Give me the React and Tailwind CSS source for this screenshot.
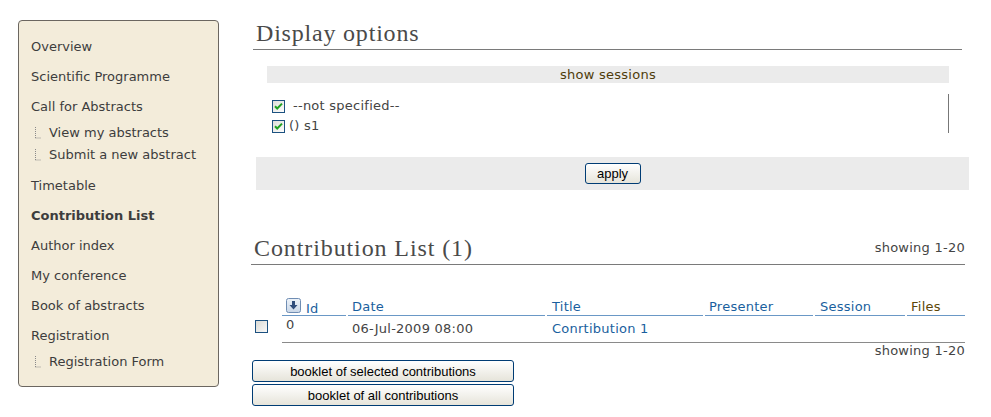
import React from "react";

const menu = [
  { label: "Overview" },
  { label: "Scientific Programme" },
  { label: "Call for Abstracts", subs: ["View my abstracts", "Submit a new abstract"], gap: true },
  { label: "Timetable" },
  { label: "Contribution List", active: true },
  { label: "Author index" },
  { label: "My conference" },
  { label: "Book of abstracts" },
  { label: "Registration", subs: ["Registration Form"] },
];

function TreeMark() {
  return (
    <svg width="8" height="12" viewBox="0 0 8 12" className="mr-[7px] shrink-0">
      <path d="M1.5 0v11M1.5 11h6" stroke="#8a8a8a" strokeWidth="1" strokeDasharray="1 1" fill="none" />
    </svg>
  );
}

function CheckedBox() {
  return (
    <svg width="13" height="13" viewBox="0 0 13 13" className="shrink-0">
      <defs>
        <linearGradient id="cbg" x1="0" y1="0" x2="1" y2="1">
          <stop offset="0" stopColor="#dcdcd6" />
          <stop offset="1" stopColor="#ffffff" />
        </linearGradient>
      </defs>
      <rect x="0.5" y="0.5" width="12" height="12" fill="url(#cbg)" stroke="#1c5180" />
      <path d="M3 6.2l2.2 2.3L10 3.6" stroke="#21a121" strokeWidth="2" fill="none" />
    </svg>
  );
}

function EmptyBox() {
  return (
    <svg width="13" height="13" viewBox="0 0 13 13" className="shrink-0">
      <defs>
        <linearGradient id="ebg" x1="0" y1="0" x2="1" y2="1">
          <stop offset="0" stopColor="#d9d9d3" />
          <stop offset="1" stopColor="#fafafa" />
        </linearGradient>
      </defs>
      <rect x="0.5" y="0.5" width="12" height="12" fill="url(#ebg)" stroke="#1c5180" />
    </svg>
  );
}

function SortIcon() {
  return (
    <svg width="15" height="15" viewBox="0 0 15 15" className="shrink-0">
      <defs>
        <linearGradient id="sbg" x1="0" y1="0" x2="0" y2="1">
          <stop offset="0" stopColor="#eef3f9" />
          <stop offset="1" stopColor="#c9d7e8" />
        </linearGradient>
      </defs>
      <rect x="0.5" y="0.5" width="14" height="14" rx="2" fill="url(#sbg)" stroke="#6f8db3" />
      <path d="M6 3h3v4h2.5L7.5 11.5 3.5 7H6z" fill="#2f4d7c" />
    </svg>
  );
}

function XpButton({ children, className }) {
  return (
    <button
      className={
        "rounded-[3px] border border-[#003c74] bg-linear-to-b from-[#ffffff] to-[#e6e4da] font-['Liberation_Sans',Arial,sans-serif] text-[13px] leading-none tracking-normal text-black " +
        className
      }
    >
      {children}
    </button>
  );
}

export default function App() {
  return (
    <div className="flex bg-white font-['DejaVu_Sans',Verdana,sans-serif] text-[13px] text-[#444]">
      {/* sidebar */}
      <div className="mt-[20px] ml-[18px] w-[201px] self-start rounded-[4px] border border-[#6b6660] bg-[#f3ecda] pt-[11px] pb-[13px] pl-[12px] text-[#3d3d3d]">
        {menu.map((m) => (
          <div key={m.label} className={m.gap ? "mb-[5px]" : ""}>
            <div className={"flex h-[30px] items-center " + (m.active ? "font-bold" : "")}>{m.label}</div>
            {m.subs &&
              m.subs.map((s) => (
                <div key={s} className="flex h-[22px] items-center pl-[3px]">
                  <TreeMark />
                  {s}
                </div>
              ))}
          </div>
        ))}
      </div>

      {/* main */}
      <div className="ml-[32px] w-[714px] tracking-[0.25px]">
        <div className="ml-[2px] h-[50px] w-[709px] border-b border-[#7a7a7a] pt-[18px] pl-[3px]">
          <h2 className="font-['Liberation_Serif',serif] text-[24px] leading-[30px] tracking-[0.8px] text-[#4a4a4a]">
            Display options
          </h2>
        </div>

        <div className="mt-[16px] ml-[16px] h-[17px] w-[682px] bg-[#ebebeb] text-center leading-[17px] text-[#4f3c0a]">
          show sessions
        </div>

        <div className="mt-[11px] ml-[16px] h-[39px] w-[682px] border-r border-[#777] pt-[2px] pl-[5px]">
          <div className="flex h-[20px] items-center">
            <CheckedBox />
            <span className="ml-[8px]">--not specified--</span>
          </div>
          <div className="flex h-[20px] items-center">
            <CheckedBox />
            <span className="ml-[4px]">() s1</span>
          </div>
        </div>

        <div className="mt-[24px] ml-[5px] flex h-[33px] w-[713px] items-center justify-center bg-[#ebebeb]">
          <XpButton className="h-[21px] w-[56px]">apply</XpButton>
        </div>

        <div className="mt-[28px] flex h-[47px] items-start justify-between border-b border-[#7a7a7a] pt-[15px] pl-[3px]">
          <h2 className="font-['Liberation_Serif',serif] text-[24px] leading-[30px] tracking-[0.9px] text-[#4a4a4a]">
            Contribution List (1)
          </h2>
          <span className="pt-[7px] leading-[16px]">showing 1-20</span>
        </div>

        {/* table header */}
        <div className="mt-[31px] flex h-[20px] leading-[16px] text-[#1a5f9e]">
          <div className="w-[31px]" />
          <div className="flex w-[64px] items-start gap-[5px] border-b border-[#6a98c6] pt-[2px] pl-[4px]">
            <SortIcon />
            <span className="pt-[3px]">Id</span>
          </div>
          <div className="ml-[2px] w-[197px] border-b border-[#6a98c6] pt-[3px] pl-[4px]">Date</div>
          <div className="ml-[2px] w-[156px] border-b border-[#6a98c6] pt-[3px] pl-[5px]">Title</div>
          <div className="ml-[2px] w-[108px] border-b border-[#6a98c6] pt-[3px] pl-[4px]">Presenter</div>
          <div className="ml-[2px] w-[90px] border-b border-[#6a98c6] pt-[3px] pl-[5px]">Session</div>
          <div className="ml-[2px] w-[58px] border-b border-[#6a98c6] pt-[3px] pl-[4px] text-[#5c4608]">Files</div>
        </div>

        {/* table row */}
        <div className="flex h-[27px] leading-[16px]">
          <div className="w-[31px] pt-[4px] pl-[4px]">
            <EmptyBox />
          </div>
          <div className="flex flex-1 border-b border-[#8a8a8a]">
            <div className="w-[66px] pt-[1px] pl-[4px]">0</div>
            <div className="w-[199px] pt-[5px] pl-[4px]">06-Jul-2009 08:00</div>
            <div className="pt-[5px] pl-[5px] text-[#1a5f9e]">Conrtibution 1</div>
          </div>
        </div>

        <div className="flex h-[17px] justify-end leading-[16px]">showing 1-20</div>

        <div className="ml-[1px] flex flex-col gap-[2px]">
          <XpButton className="h-[22px] w-[262px]">booklet of selected contributions</XpButton>
          <XpButton className="h-[22px] w-[262px]">booklet of all contributions</XpButton>
        </div>
      </div>
    </div>
  );
}
